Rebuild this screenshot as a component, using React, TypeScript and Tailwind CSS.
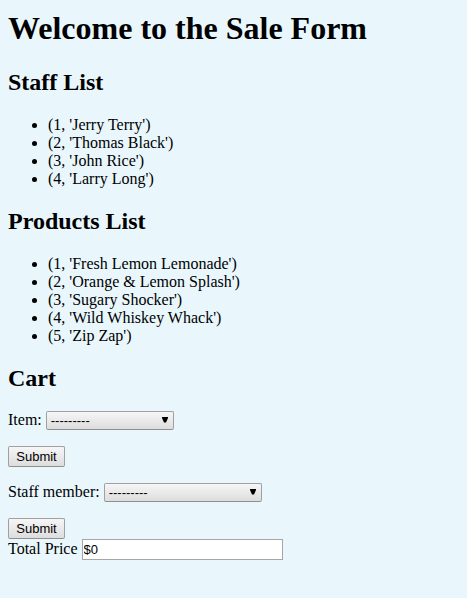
import React from "react";

const staff: [number, string][] = [
  [1, "Jerry Terry"],
  [2, "Thomas Black"],
  [3, "John Rice"],
  [4, "Larry Long"],
];

const products: [number, string][] = [
  [1, "Fresh Lemon Lemonade"],
  [2, "Orange & Lemon Splash"],
  [3, "Sugary Shocker"],
  [4, "Wild Whiskey Whack"],
  [5, "Zip Zap"],
];

function Heading({ children }: { children: React.ReactNode }) {
  return <h2 className="text-2xl leading-7 font-bold">{children}</h2>;
}

function Entries({ items }: { items: [number, string][] }) {
  return (
    <ul className="mt-5 mb-[19px] list-disc pl-10">
      {items.map(([id, name]) => (
        <li key={id}>{`(${id}, '${name}')`}</li>
      ))}
    </ul>
  );
}

function Picker({ id, label, width }: { id: string; label: string; width: string }) {
  return (
    <div className="flex items-start gap-1">
      <label htmlFor={id}>{label}</label>
      <div className={`relative ${width}`}>
        <select
          id={id}
          className="block h-[19px] w-full appearance-none rounded-[2px] border border-[#a0a0a0] border-b-[#909090] bg-linear-to-b from-[#f6f6f6] to-[#dddddd] pl-1 font-['Liberation_Sans',sans-serif] text-[13px] leading-4"
        >
          <option>---------</option>
        </select>
        <svg
          className="pointer-events-none absolute top-[6px] right-[6px] h-[6px] w-[6px]"
          viewBox="0 0 6 6"
          aria-hidden="true"
        >
          <path d="M0 0H6V1L4 5.5H2L0 1Z" fill="#000" />
        </svg>
      </div>
    </div>
  );
}

function Submit() {
  return (
    <button
      type="submit"
      className="block h-[21px] w-[57px] rounded-[2px] border border-[#a0a0a0] border-b-[#909090] bg-linear-to-b from-[#f6f6f6] to-[#dddddd] text-center font-['Liberation_Sans',sans-serif] text-[13px] leading-4"
    >
      Submit
    </button>
  );
}

export default function App() {
  return (
    <main className="min-h-screen bg-[#e9f7fd] px-2 pt-2 font-['Liberation_Serif',serif] text-base leading-[18px] text-black">
      <h1 className="mb-5 text-[32px] leading-10 font-bold">Welcome to the Sale Form</h1>
      <Heading>Staff List</Heading>
      <Entries items={staff} />
      <Heading>Products List</Heading>
      <Entries items={products} />
      <Heading>Cart</Heading>
      <form className="mt-[19px] flex flex-col gap-4" onSubmit={(e) => e.preventDefault()}>
        <Picker id="item" label="Item:" width="w-32" />
        <Submit />
      </form>
      <form className="mt-4 flex flex-col gap-4" onSubmit={(e) => e.preventDefault()}>
        <Picker id="staff" label="Staff member:" width="w-[158px]" />
        <Submit />
      </form>
      <div className="flex items-start gap-1">
        <label htmlFor="total" className="leading-5">
          Total Price
        </label>
        <input
          id="total"
          type="text"
          defaultValue="$0"
          className="h-[21px] w-[201px] border border-[#a6a6a6] bg-white px-px font-['Liberation_Sans',sans-serif] text-[13px]"
        />
      </div>
    </main>
  );
}
